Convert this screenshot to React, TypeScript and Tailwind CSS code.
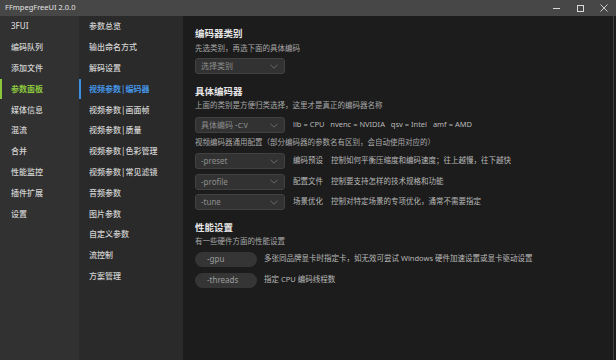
import React from "react";

const FONT = { fontFamily: '"Noto Sans", "Noto Sans CJK SC", sans-serif' };

const nav1 = ["3FUI", "编码队列", "添加文件", "参数面板", "媒体信息", "混流", "合并", "性能监控", "插件扩展", "设置"];
const nav2 = [
  "参数总览",
  "输出命名方式",
  "解码设置",
  "视频参数 | 编码器",
  "视频参数 | 画面帧",
  "视频参数 | 质量",
  "视频参数 | 色彩管理",
  "视频参数 | 常见滤镜",
  "音频参数",
  "图片参数",
  "自定义参数",
  "流控制",
  "方案管理",
];

function Chevron() {
  return (
    <svg width="8" height="5" viewBox="0 0 8 5" fill="none" className="shrink-0">
      <path d="M0.5 0.8 L4 4.2 L7.5 0.8" stroke="#707070" strokeWidth="0.9" />
    </svg>
  );
}

function Select({ label }: { label: string }) {
  return (
    <div className="flex h-[16px] w-[90px] shrink-0 items-center justify-between rounded-[3px] border border-[#414141] bg-[#323232] pl-[5px] pr-[6px]">
      <span className="text-[8px] leading-none text-[#8e8e8e]">{label}</span>
      <Chevron />
    </div>
  );
}

function Pill({ label }: { label: string }) {
  return (
    <div className="flex h-[15px] w-[62px] shrink-0 items-center rounded-full bg-[#353535] pl-[12px]">
      <span className="text-[8px] leading-none text-[#9c9c9c]">{label}</span>
    </div>
  );
}

function SelectRow({ label, k, desc }: { label: string; k?: string; desc: string }) {
  return (
    <div className="flex items-center">
      <Select label={label} />
      <div className="ml-[8px] flex items-center whitespace-pre text-[7.5px] leading-none text-[#b8b8b8]">
        {k && <span className="mr-[8px]">{k}</span>}
        <span>{desc}</span>
      </div>
    </div>
  );
}

export default function App() {
  return (
    <div className="flex h-[360px] w-[616px] flex-col overflow-hidden bg-[#1c1c1c]" style={FONT}>
      {/* title bar */}
      <div className="flex h-[16px] shrink-0 items-center justify-between bg-[#474747] pl-[5px]">
        <span className="text-[7.5px] leading-none text-[#e2e2e2]">FFmpegFreeUI 2.0.0</span>
        <div className="flex h-full items-center">
          <div className="flex w-[24px] justify-center">
            <div className="h-[1px] w-[7px] bg-[#d8d8d8]" />
          </div>
          <div className="flex w-[24px] justify-center">
            <div className="h-[7px] w-[7px] border border-[#d8d8d8]" />
          </div>
          <div className="flex w-[24px] justify-center">
            <svg width="8" height="8" viewBox="0 0 8 8">
              <path d="M0.5 0.5 L7.5 7.5 M7.5 0.5 L0.5 7.5" stroke="#d8d8d8" strokeWidth="0.9" />
            </svg>
          </div>
        </div>
      </div>

      <div className="flex min-h-0 flex-1">
        {/* column 1 */}
        <div className="flex w-[79px] shrink-0 flex-col bg-[#313131]">
          {nav1.map((t, i) => {
            const active = i === 3;
            return (
              <div key={t} className="relative flex h-[20.8px] items-center pl-[11px]">
                {active && <div className="absolute left-0 top-[1px] bottom-0 w-[2px] bg-[#8cc63f]" />}
                <span className={`text-[8px] leading-none ${active ? "font-semibold text-[#8cc63f]" : "font-medium text-[#d2d2d2]"}`}>{t}</span>
              </div>
            );
          })}
        </div>

        {/* column 2 */}
        <div className="flex w-[104px] shrink-0 flex-col bg-[#2a2a2a]">
          {nav2.map((t, i) => {
            const active = i === 3;
            return (
              <div key={t} className="relative flex h-[20.8px] items-center pl-[10px]">
                {active && <div className="absolute left-0 top-[1px] bottom-0 w-[2px] bg-[#3b8fe0]" />}
                <span className={`text-[8px] leading-none whitespace-pre ${active ? "font-semibold text-[#4596e6]" : "font-medium text-[#d2d2d2]"}`}>{t.replace(" | ", "|")}</span>
              </div>
            );
          })}
        </div>

        {/* content */}
        <div className="flex min-w-0 flex-1">
          <div className="flex min-w-0 flex-1 flex-col pl-[12px] pt-[11px]">
            <div className="text-[9.5px] font-semibold leading-[14px] text-[#e6e6e6]">编码器类别</div>
            <div className="mt-[2px] text-[7.5px] leading-[11px] text-[#a8a8a8]">先选类别，再选下面的具体编码</div>
            <div className="mt-[4px]">
              <Select label="选择类别" />
            </div>

            <div className="mt-[11px] text-[9.5px] font-semibold leading-[14px] text-[#e6e6e6]">具体编码器</div>
            <div className="mt-[1px] text-[7.5px] leading-[11px] text-[#a8a8a8]">上面的类别是方便归类选择，这里才是真正的编码器名称</div>
            <div className="mt-[6px]">
              <SelectRow label="具体编码 -c:v" desc="lib = CPU   nvenc = NVIDIA   qsv = Intel   amf = AMD" />
            </div>
            <div className="mt-[4px] text-[7.5px] leading-[11px] text-[#a8a8a8]">视频编码器通用配置（部分编码器的参数名有区别，会自动使用对应的）</div>
            <div className="mt-[5px] flex flex-col gap-[4.5px]">
              <SelectRow label="-preset" k="编码预设" desc="控制如何平衡压缩度和编码速度；往上越慢，往下越快" />
              <SelectRow label="-profile" k="配置文件" desc="控制要支持怎样的技术规格和功能" />
              <SelectRow label="-tune" k="场景优化" desc="控制对特定场景的专项优化，通常不需要指定" />
            </div>

            <div className="mt-[10.5px] text-[9.5px] font-semibold leading-[14px] text-[#e6e6e6]">性能设置</div>
            <div className="mt-[1px] text-[7.5px] leading-[11px] text-[#a8a8a8]">有一些硬件方面的性能设置</div>
            <div className="mt-[5px] flex flex-col gap-[6px]">
              <div className="flex items-center">
                <Pill label="-gpu" />
                <span className="ml-[7px] text-[7.5px] leading-none text-[#b8b8b8]">多张同品牌显卡时指定卡，如无效可尝试 Windows 硬件加速设置或显卡驱动设置</span>
              </div>
              <div className="flex items-center">
                <Pill label="-threads" />
                <span className="ml-[7px] text-[7.5px] leading-none text-[#b8b8b8]">指定 CPU 编码线程数</span>
              </div>
            </div>
          </div>
          <div className="w-[3px] shrink-0" />
          <div className="w-[1px] shrink-0 bg-[#3e3e3e]" />
          <div className="w-[2px] shrink-0" />
        </div>
      </div>
    </div>
  );
}
